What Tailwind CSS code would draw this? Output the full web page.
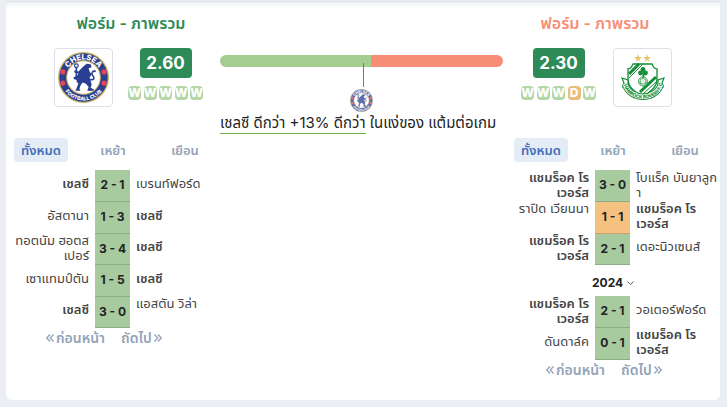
<!DOCTYPE html>
<html lang="th">
<head>
    <meta charset="UTF-8">
    <meta name="viewport" content="width=device-width, initial-scale=1.0">
    <title>ฟอร์ม - ภาพรวม</title>
    <script src="https://cdn.jsdelivr.net/npm/@tailwindcss/browser@4"></script>
</head>
<body class="bg-[#ebeff3] font-['Inter','Noto_Sans_Thai','Noto_Sans',sans-serif] text-[#222]">
    <!-- Shared club crests -->
    <svg class="hidden">
        <symbol id="chelsea" viewBox="0 0 50 50">
            <circle cx="25" cy="25" r="24.3" fill="#2a3f92" stroke="#c9b260" stroke-width="1.2"/>
            <circle cx="25" cy="25" r="16.5" fill="#fff" stroke="#c9b260" stroke-width="1"/>
            <path id="arc-top" d="M7.500 25a17.500 17.500 0 0 1 35 0" fill="none"/>
            <path id="arc-bottom" d="M2.500 25a22.500 22.500 0 0 0 45 0" fill="none"/>
            <text font-size="7.5" font-weight="800" fill="#fff" text-anchor="middle"><textPath href="#arc-top" startOffset="50%">CHELSEA</textPath></text>
            <text font-size="5" font-weight="800" fill="#fff" text-anchor="middle"><textPath href="#arc-bottom" startOffset="50%">FOOTBALL CLUB</textPath></text>
            <g fill="#ee4450">
                <circle cx="4.8" cy="19.5" r="2.5"/><circle cx="4.8" cy="30.5" r="2.5"/>
                <circle cx="45.2" cy="19.5" r="2.5"/><circle cx="45.2" cy="30.5" r="2.5"/>
            </g>
            <path d="M25 14l3-2.500 4 .5 1 3-3 1 1 3 2 3-2 3 1 3 1 4-1 3 2 1v2h-5l1-4-3-3-3-1-2 3-1 3 1 2h-5l1-2 2-5-2-2 1-3-3 1-1-2 4-2 1-2-4-1v-2l4 1z" fill="#2a3f92"/>
            <path d="M18 14.500v13M31 27c5 1 5-2 3-4s0-5 3-4M29 37h6" fill="none" stroke="#2a3f92" stroke-width="1.6"/>
            <circle cx="18" cy="13.500" r="1.800" fill="none" stroke="#2a3f92" stroke-width="1.2"/>
        </symbol>
        <symbol id="shamrock" viewBox="0 0 44 48">
            <path id="star" d="M17 0l1 3h3l-2.500 2 1 3-2.500-2-2.500 2 1-3L13 3h3z" fill="#e5c66e"/>
            <use href="#star" x="9"/>
            <path d="M7 15c3 0 4-3 5-5h19c1 2 2 5 5 5v10c0 8-6 13-14 17C13 38 7 33 7 25z" fill="#fff" stroke="#128c35" stroke-width="1.3"/>
            <path d="M8 20L18 10M35 23L19 38" stroke="#128c35" stroke-width="3"/>
            <path d="M8 24L22 10M35 28L22 40" stroke="#128c35" stroke-width="1"/>
            <g fill="#128c35">
                <circle cx="22" cy="15.500" r="2.400"/><circle cx="19.500" cy="19" r="2.400"/><circle cx="24.500" cy="19" r="2.400"/>
                <path d="M21.500 18h1l1 5h-2z"/>
            </g>
            <circle cx="22" cy="27.500" r="4.500" fill="#e4f2e5" stroke="#128c35" stroke-width=".8"/>
            <path d="M19 26l3-2 3 2-1 4h-4zM22 23v1M18 28l2 2M26 28l-2 2" fill="none" stroke="#128c35" stroke-width=".6"/>
            <path d="M1 24l6 2v6l-5 1 1-4zM43 24l-6 2v6l5 1-1-4z" fill="#fff" stroke="#128c35" stroke-width="1.2"/>
            <path d="M4 30c5 17 31 17 36 0" fill="none" stroke="#128c35" stroke-width="6.500"/>
            <path d="M4 30c5 17 31 17 36 0" fill="none" stroke="#fff" stroke-width="4.700"/>
            <path id="ribbon" d="M2.800 31c5 18 33.400 18 38.400 0" fill="none"/>
            <text font-size="4.500" font-weight="800" fill="#128c35" text-anchor="middle"><textPath href="#ribbon" startOffset="50%">SHAMROCK ROVERS F.C.</textPath></text>
        </symbol>
        <symbol id="prev" viewBox="0 0 8 8"><path d="M4 .5L.7 4 4 7.500M7.500 .5L4.200 4l3.300 3.500" fill="none" stroke="currentColor" stroke-width="1.3"/></symbol>
        <symbol id="next" viewBox="0 0 8 8"><path d="M.5 .5L3.800 4 .5 7.500M4 .5L7.300 4 4 7.500" fill="none" stroke="currentColor" stroke-width="1.3"/></symbol>
    </svg>

    <main class="mt-px mr-[7px] mb-1.5 ml-1.5 grid grid-cols-[204px_minmax(0,1fr)_204px] rounded-b-md border-t border-[#dfe3e8] bg-white pr-0.5 pb-5 pl-2 shadow-[inset_0_6px_6px_-4px_#e9ecf0]">

        <!-- Home team -->
        <section>
            <h2 class="mt-[11px] ml-[30px] w-[174px] text-center text-base leading-5 font-semibold text-[#2e8b57]">ฟอร์ม - ภาพรวม</h2>
            <div class="mt-[15px] flex gap-[15px] pl-10">
                <div class="flex h-[59px] w-[59px] items-center justify-center rounded border border-[#dcdfe8]">
                    <svg class="size-[51px]" role="img" aria-label="เชลซี"><use href="#chelsea"/></svg>
                </div>
                <div class="flex flex-col items-center gap-2">
                    <div class="flex h-[30px] w-[52px] items-center justify-center rounded bg-[#2e8b57] text-[17px] leading-6 font-bold text-white">2.60</div>
                    <div class="flex w-[75px] justify-between text-xs leading-[14px] font-extrabold text-white">
                        <span class="flex w-[13px] justify-center rounded-sm bg-[#b5d6a7]">W</span>
                        <span class="flex w-[13px] justify-center rounded-sm bg-[#b5d6a7]">W</span>
                        <span class="flex w-[13px] justify-center rounded-sm bg-[#b5d6a7]">W</span>
                        <span class="flex w-[13px] justify-center rounded-sm bg-[#b5d6a7]">W</span>
                        <span class="flex w-[13px] justify-center rounded-sm bg-[#b5d6a7]">W</span>
                    </div>
                </div>
            </div>

            <div class="mt-[31px] flex gap-[18px] text-[13px] leading-6 font-semibold text-[#94a3b8]">
                <button class="w-[54px] rounded-sm bg-[#e4ecf6] text-[#4470b8]">ทั้งหมด</button>
                <button class="w-[54px]">เหย้า</button>
                <button class="w-[54px]">เยือน</button>
            </div>
            <table class="mt-2 w-full table-fixed text-[13px] leading-[15px] text-[#444]">
                <colgroup><col class="w-[81px]"><col class="w-[35px]"><col></colgroup>
                <tbody>
                    <tr class="h-[31px] even:h-[32px]">
                        <td class="pr-1.5 pb-1 text-right font-semibold">เชลซี</td>
                        <td class="border-b border-[#8aae84] bg-[#a7cb9f] text-center text-xs font-bold text-[#222]">2 - 1</td>
                        <td class="pb-1 pl-1.5">เบรนท์ฟอร์ด</td>
                    </tr>
                    <tr class="h-[31px] even:h-[32px]">
                        <td class="pr-1.5 pb-1 text-right">อัสตานา</td>
                        <td class="border-b border-[#8aae84] bg-[#a7cb9f] text-center text-xs font-bold text-[#222]">1 - 3</td>
                        <td class="pb-1 pl-1.5 font-semibold">เชลซี</td>
                    </tr>
                    <tr class="h-[31px] even:h-[32px]">
                        <td class="pr-1.5 text-right align-top">ทอตนัม ฮอตส<br>เปอร์</td>
                        <td class="border-b border-[#8aae84] bg-[#a7cb9f] text-center text-xs font-bold text-[#222]">3 - 4</td>
                        <td class="pb-1 pl-1.5 font-semibold">เชลซี</td>
                    </tr>
                    <tr class="h-[31px] even:h-[32px]">
                        <td class="pr-1.5 pb-1 text-right">เซาแทมป์ตัน</td>
                        <td class="border-b border-[#8aae84] bg-[#a7cb9f] text-center text-xs font-bold text-[#222]">1 - 5</td>
                        <td class="pb-1 pl-1.5 font-semibold">เชลซี</td>
                    </tr>
                    <tr class="h-[31px] even:h-[32px]">
                        <td class="pr-1.5 pb-1 text-right font-semibold">เชลซี</td>
                        <td class="border-b border-[#8aae84] bg-[#a7cb9f] text-center text-xs font-bold text-[#222]">3 - 0</td>
                        <td class="pl-1.5 align-top">แอสตัน วิล่า</td>
                    </tr>
                </tbody>
            </table>
            <div class="flex gap-4 pl-8 text-sm leading-5 font-semibold text-[#94a3b8]">
                <button class="flex items-center gap-0.5"><svg class="size-2"><use href="#prev"/></svg>ก่อนหน้า</button>
                <button class="flex items-center gap-0.5">ถัดไป<svg class="size-2"><use href="#next"/></svg></button>
            </div>
        </section>

        <!-- Comparison -->
        <section class="pt-[53px] pr-[11px] pl-0.5">
            <div class="relative flex h-3">
                <div class="w-[53.4%] rounded-l-md bg-[#a3cd91]"></div>
                <div class="flex-1 rounded-r-md bg-[#f78d76]"></div>
                <div class="absolute top-2 left-1/2 h-6 w-0.5 border-r border-[#777]"></div>
            </div>
            <div class="flex justify-center pt-[22px]">
                <svg class="size-[23px] opacity-75" role="img" aria-label="เชลซี"><use href="#chelsea"/></svg>
            </div>
            <p class="text-[15px] leading-[21px] whitespace-nowrap"><span class="inline-block border-b border-[#6fb04d]">เชลซี ดีกว่า +13% ดีกว่า</span> ในแง่ของ แต้มต่อเกม</p>
        </section>

        <!-- Away team -->
        <section>
            <h2 class="mt-[11px] w-[162px] text-center text-base leading-5 font-semibold text-[#f78d76]">ฟอร์ม - ภาพรวม</h2>
            <div class="mt-[15px] flex gap-[17px] pl-[7px]">
                <div class="flex flex-col items-center gap-2">
                    <div class="flex h-[30px] w-[52px] items-center justify-center rounded bg-[#2e8b57] text-[17px] leading-6 font-bold text-white">2.30</div>
                    <div class="flex w-[75px] justify-between text-xs leading-[14px] font-extrabold text-white">
                        <span class="flex w-[13px] justify-center rounded-sm bg-[#b5d6a7]">W</span>
                        <span class="flex w-[13px] justify-center rounded-sm bg-[#b5d6a7]">W</span>
                        <span class="flex w-[13px] justify-center rounded-sm bg-[#b5d6a7]">W</span>
                        <span class="flex w-[13px] justify-center rounded-sm bg-[#e9bd7a]">D</span>
                        <span class="flex w-[13px] justify-center rounded-sm bg-[#b5d6a7]">W</span>
                    </div>
                </div>
                <div class="flex h-[59px] w-[59px] items-center justify-center rounded border border-[#dcdfe8]">
                    <svg class="h-12 w-11" role="img" aria-label="แชมร็อค โรเวอร์ส"><use href="#shamrock"/></svg>
                </div>
            </div>

            <div class="mt-[31px] flex gap-[18px] text-[13px] leading-6 font-semibold text-[#94a3b8]">
                <button class="w-[54px] rounded-sm bg-[#e4ecf6] text-[#4470b8]">ทั้งหมด</button>
                <button class="w-[54px]">เหย้า</button>
                <button class="w-[54px]">เยือน</button>
            </div>
            <table class="mt-2 w-full table-fixed text-[13px] leading-[15px] text-[#444]">
                <colgroup><col class="w-[81px]"><col class="w-[35px]"><col></colgroup>
                <tbody>
                    <tr class="h-[31px] even:h-[32px]">
                        <td class="pr-1.5 text-right align-top font-semibold">แชมร็อค โร<br>เวอร์ส</td>
                        <td class="border-b border-[#8aae84] bg-[#a7cb9f] text-center text-xs font-bold text-[#222]">3 - 0</td>
                        <td class="pl-1.5 align-top whitespace-nowrap">โบแร็ค บันยาลูก<br>า</td>
                    </tr>
                    <tr class="h-[31px] even:h-[32px]">
                        <td class="pr-1.5 text-right align-top">ราปิด เวียนนา</td>
                        <td class="border-b border-[#d09f68] bg-[#f5c180] text-center text-xs font-bold text-[#222]">1 - 1</td>
                        <td class="pl-1.5 align-top font-semibold">แชมร็อค โร<br>เวอร์ส</td>
                    </tr>
                    <tr class="h-[31px] even:h-[32px]">
                        <td class="pr-1.5 text-right align-top font-semibold">แชมร็อค โร<br>เวอร์ส</td>
                        <td class="border-b border-[#8aae84] bg-[#a7cb9f] text-center text-xs font-bold text-[#222]">2 - 1</td>
                        <td class="pb-1 pl-1.5">เดอะนิวเซนส์</td>
                    </tr>
                    <tr class="h-[31px] even:h-[32px]">
                        <td colspan="3" class="pt-1.5 pl-[78px] text-xs font-bold text-[#222]">
                            <button class="flex items-center gap-1">2024<svg class="h-1 w-[7px]" viewBox="0 0 7 4" fill="none" stroke="#555"><path d="M.5 .5l3 3 3-3"/></svg></button>
                        </td>
                    </tr>
                    <tr class="h-[31px] even:h-[32px]">
                        <td class="pr-1.5 text-right align-top font-semibold">แชมร็อค โร<br>เวอร์ส</td>
                        <td class="border-b border-[#8aae84] bg-[#a7cb9f] text-center text-xs font-bold text-[#222]">2 - 1</td>
                        <td class="pb-1 pl-1.5">วอเตอร์ฟอร์ด</td>
                    </tr>
                    <tr class="h-[31px] even:h-[32px]">
                        <td class="pr-1.5 pb-1 text-right">ดันดาล์ค</td>
                        <td class="border-b border-[#8aae84] bg-[#a7cb9f] text-center text-xs font-bold text-[#222]">0 - 1</td>
                        <td class="pl-1.5 align-top font-semibold">แชมร็อค โร<br>เวอร์ส</td>
                    </tr>
                </tbody>
            </table>
            <div class="flex gap-4 pl-8 text-sm leading-5 font-semibold text-[#94a3b8]">
                <button class="flex items-center gap-0.5"><svg class="size-2"><use href="#prev"/></svg>ก่อนหน้า</button>
                <button class="flex items-center gap-0.5">ถัดไป<svg class="size-2"><use href="#next"/></svg></button>
            </div>
        </section>
    </main>
</body>
</html>
